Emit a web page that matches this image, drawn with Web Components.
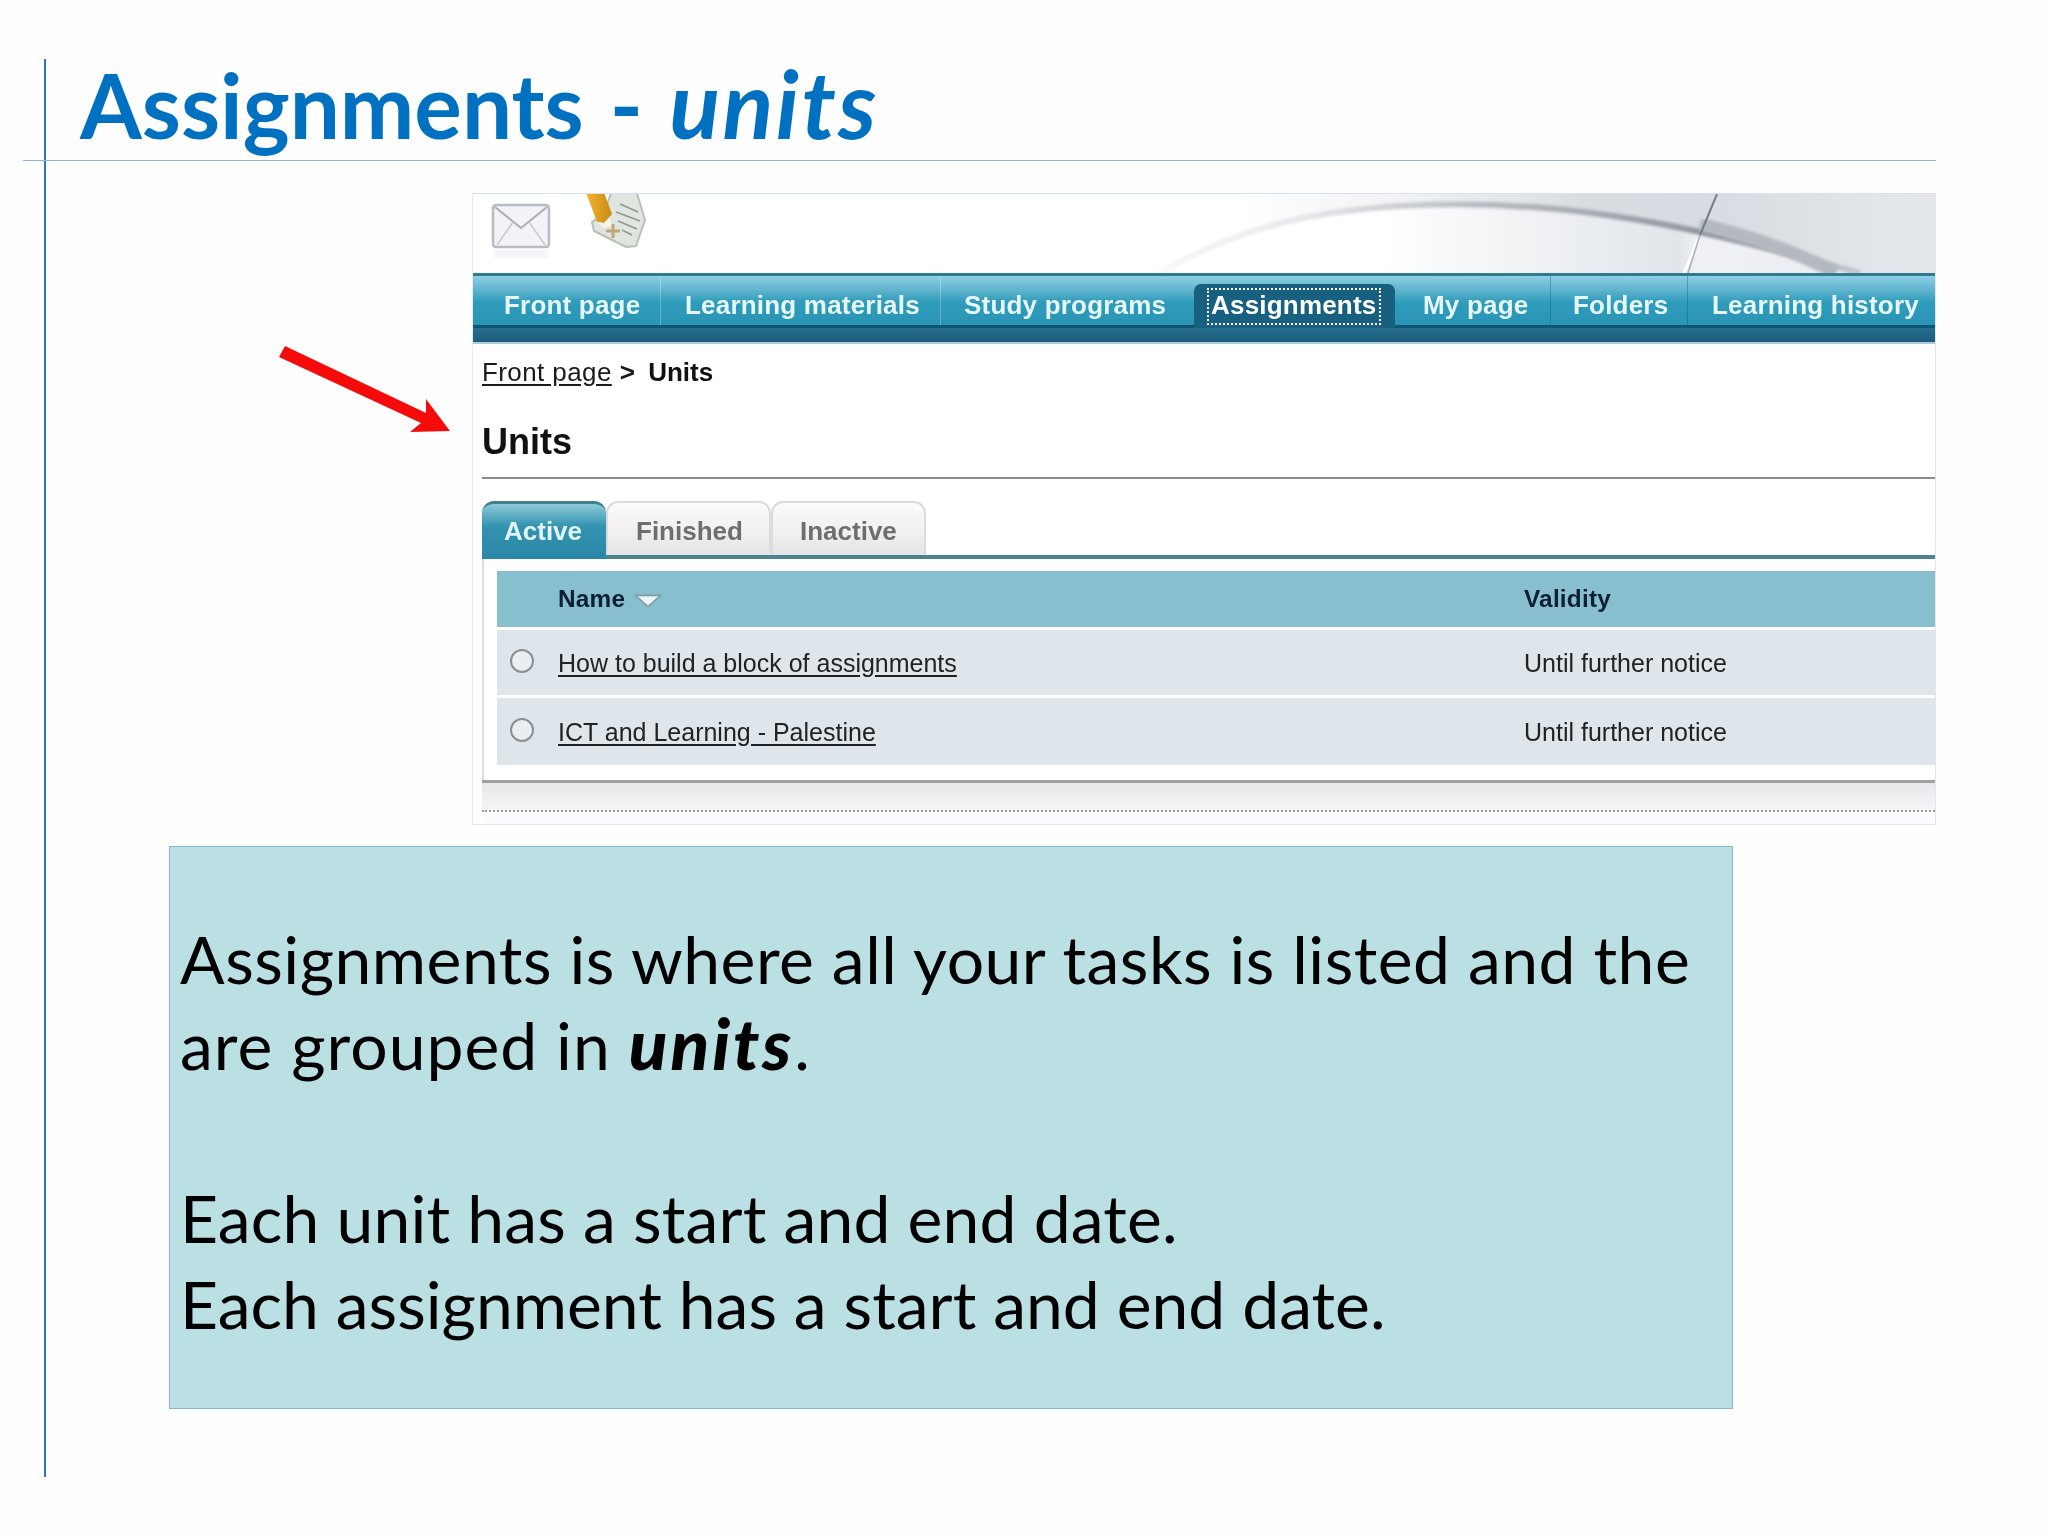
<!DOCTYPE html>
<html lang="en">
<head>
<meta charset="utf-8">
<title>Assignments - units</title>
<style>
  html, body { margin: 0; background: #fefefe; }
</style>
</head>
<body>
<deck-slide>
  <slide-title>Assignments - <em>units</em></slide-title>
  <lms-screen>
    <lms-banner></lms-banner>
    <lms-nav>
      <lms-nav-item pad="31" line="light">Front page</lms-nav-item>
      <lms-nav-item pad="24" line="light">Learning materials</lms-nav-item>
      <lms-nav-item pad="23">Study programs</lms-nav-item>
      <lms-nav-item pad="19" active>Assignments</lms-nav-item>
      <lms-nav-item pad="28" line="dark">My page</lms-nav-item>
      <lms-nav-item pad="22" line="dark">Folders</lms-nav-item>
      <lms-nav-item pad="24">Learning history</lms-nav-item>
    </lms-nav>
    <lms-content>
      <lms-crumbs current="Units">Front page</lms-crumbs>
      <lms-heading>Units</lms-heading>
      <lms-tabs>
        <lms-tab w="124" pad="22" active>Active</lms-tab>
        <lms-tab w="165" pad="28">Finished</lms-tab>
        <lms-tab w="155" pad="27">Inactive</lms-tab>
      </lms-tabs>
      <lms-table>
        <lms-table-head validity="Validity">Name</lms-table-head>
        <lms-table-row h="65" validity="Until further notice">How to build a block of assignments</lms-table-row>
        <lms-table-row h="67" validity="Until further notice">ICT and Learning - Palestine</lms-table-row>
      </lms-table>
    </lms-content>
    <lms-footer></lms-footer>
  </lms-screen>
  <note-box><span style="letter-spacing:.5px">Assignments is where all your tasks is listed and the</span><br><span style="letter-spacing:1px">are grouped in </span><b style="font-weight:900;font-size:71px;line-height:0;letter-spacing:3px"><i>units</i></b>.<br><br><span style="letter-spacing:.15px">Each unit has a start and end date.</span><br>Each assignment has a start and end date.</note-box>
</deck-slide>

<script>
class DeckSlide extends HTMLElement {
  constructor() {
    super();
    this.attachShadow({ mode: "open" });
  }

  connectedCallback() {
    this.shadowRoot.innerHTML = /* html */`
    <style>
      :host { display: block; position: relative; width: 2048px; height: 1536px; overflow: hidden; }
      .frame {
        box-sizing: border-box;
        width: 1892px;
        height: 1418px;
        margin-left: 44px;
        border-left: 2px solid #2a78bb;
        display: flex;
        flex-direction: column;
        align-items: flex-start;
      }
      .top { height: 59px; }
      .arrow { position: absolute; left: 270px; top: 340px; }
    </style>
    <div class="top"></div>
    <div class="frame"><slot></slot></div>
    <svg class="arrow" width="190" height="100" viewBox="270 340 190 100">
      <polygon fill="#f60b0b" points="285,346 426,413 426,399 450,431 410,432 421,423 279,357"/>
    </svg>`;
  }
}

class SlideTitle extends HTMLElement {
  constructor() {
    super();
    this.attachShadow({ mode: "open" });
  }

  connectedCallback() {
    this.shadowRoot.innerHTML = /* html */`
    <style>
      :host {
        display: block;
        box-sizing: border-box;
        width: 1913px;
        height: 102px;
        margin-left: -23px;
        padding-left: 57px;
        border-bottom: 1px solid #8fb4d8;
        font: 700 89px/92px Lato, sans-serif;
        word-spacing: 4.5px;
        color: #0070c0;
        white-space: nowrap;
      }
      ::slotted(em) { font-size: 94px; line-height: 0; letter-spacing: 2.5px; }
    </style>
    <slot></slot>`;
  }
}

class LmsScreen extends HTMLElement {
  constructor() {
    super();
    this.attachShadow({ mode: "open" });
  }

  connectedCallback() {
    this.shadowRoot.innerHTML = /* html */`
    <style>
      :host {
        display: flex;
        flex-direction: column;
        box-sizing: border-box;
        width: 1464px;
        height: 632px;
        margin: 32px 0 0 426px;
        border: 1px solid #dfe6ee;
        border-left-color: #e6ebf0;
        border-top-color: #d5e0ec;
        background: #fff;
        font-family: "Liberation Sans", Arial, sans-serif;
        filter: blur(.5px);
      }
    </style>
    <slot></slot>`;
  }
}

class LmsBanner extends HTMLElement {
  constructor() {
    super();
    this.attachShadow({ mode: "open" });
  }

  connectedCallback() {
    this.shadowRoot.innerHTML = /* html */`
    <style>
      :host { display: block; height: 79px; }
      svg { display: block; }
    </style>
    <svg width="1462" height="79" viewBox="473 194 1462 79">
      <defs>
        <linearGradient id="under" gradientUnits="userSpaceOnUse" x1="1380" y1="0" x2="1935" y2="0">
          <stop offset="0" stop-color="#fff"/>
          <stop offset=".54" stop-color="#e1e5ea"/>
          <stop offset=".57" stop-color="#eff1f4"/>
          <stop offset="1" stop-color="#e8ebee"/>
        </linearGradient>
        <linearGradient id="over" gradientUnits="userSpaceOnUse" x1="1230" y1="0" x2="1935" y2="0">
          <stop offset="0" stop-color="#fff"/>
          <stop offset=".25" stop-color="#f1f2f4"/>
          <stop offset=".5" stop-color="#d9dde2"/>
          <stop offset=".68" stop-color="#d8dce2"/>
          <stop offset="1" stop-color="#e5e8eb"/>
        </linearGradient>
        <linearGradient id="band" gradientUnits="userSpaceOnUse" x1="1160" y1="0" x2="1860" y2="0">
          <stop offset="0" stop-color="#f8f8f9"/>
          <stop offset=".2" stop-color="#e6e7e9"/>
          <stop offset=".45" stop-color="#b8bcc2"/>
          <stop offset=".78" stop-color="#8f959d"/>
          <stop offset="1" stop-color="#c4c8cd"/>
        </linearGradient>
        <linearGradient id="pencil" x1="0" y1="0" x2="1" y2="0">
          <stop offset="0" stop-color="#f2b632"/>
          <stop offset="1" stop-color="#c98a12"/>
        </linearGradient>
        <filter id="soft"><feGaussianBlur stdDeviation="1.6"/></filter>
        <filter id="softer"><feGaussianBlur stdDeviation=".7"/></filter>
      </defs>
      <rect x="473" y="194" width="1462" height="79" fill="#fff"/>
      <rect x="1380" y="194" width="555" height="79" fill="url(#under)"/>
      <path fill="url(#over)" d="M1160 273 C1230 232 1300 212 1400 206 C1500 200 1600 210 1700 232 C1770 248 1820 262 1860 273 L1935 273 L1935 194 L1160 194 Z"/>
      <path fill="none" stroke="url(#band)" stroke-width="6" filter="url(#soft)" d="M1160 273 C1230 232 1300 212 1400 206 C1500 200 1600 210 1700 232 C1770 248 1820 262 1860 273"/>
      <path fill="none" stroke="#b4b9c0" stroke-width="13" filter="url(#soft)" d="M1700 224 C1760 238 1800 254 1836 273"/>
      <path fill="none" stroke="#fff" stroke-width="3" filter="url(#softer)" d="M1698 240 L1684 273"/>
      <path fill="none" stroke="#777d85" stroke-width="2" d="M1717 194 L1700 235"/>
      <path fill="none" stroke="#a9aeb5" stroke-width="1.5" d="M1700 235 L1688 273"/>

      <!-- mail -->
      <g filter="url(#softer)">
        <rect x="493" y="205" width="56" height="42" rx="3" fill="#f1f3f7" stroke="#b7bbc4" stroke-width="2.5"/>
        <path fill="none" stroke="#a9aeb8" stroke-width="2" d="M495 207 L521 228 L547 207"/>
        <path fill="none" stroke="#c6cad2" stroke-width="1.5" d="M497 245 L513 222 M545 245 L529 222"/>
        <rect x="494" y="250" width="54" height="8" fill="#f5f6f8"/>
      </g>

      <!-- note with pencil -->
      <g filter="url(#softer)">
        <polygon fill="#dfe5df" stroke="#b9c0b6" stroke-width="2" points="612,190 636,190 645,220 636,246 626,247 594,231 592,222 604,214"/>
        <path fill="none" stroke="#8e9a90" stroke-width="1.6" d="M620 204 L638 212 M616 212 L640 221 M618 221 L637 229 M622 230 L632 235"/>
        <polygon fill="url(#pencil)" points="585,190 603,190 612,214 604,223 597,222"/>
        <polygon fill="#f7f4e8" points="597,222 604,223 609,218 612,226 604,228"/>
        <path fill="none" stroke="#c2a874" stroke-width="3" d="M606 231 L620 231 M613 224 L613 238"/>
      </g>
    </svg>`;
  }
}

class LmsNav extends HTMLElement {
  constructor() {
    super();
    this.attachShadow({ mode: "open" });
  }

  connectedCallback() {
    this.shadowRoot.innerHTML = /* html */`
    <style>
      :host {
        display: grid;
        grid-template-columns: 188px 280px 253px 201px 156px 137px 1fr;
        height: 71px;
        box-sizing: border-box;
        padding-bottom: 17px;
        border-top: 3px solid #317a90;
        border-bottom: 2px solid #a8d0da;
        background: linear-gradient(#8dd0e4 0, #5fb4cd 14px, #2f9cbc 26px, #2a93b4 51px);
        position: relative;
      }
      .low {
        position: absolute; left: 0; right: 0; bottom: 0; height: 17px;
        box-sizing: border-box;
        border-top: 3px solid #0f5673;
        background: linear-gradient(#276f8f, #1c5b7b);
      }
    </style>
    <slot></slot>
    <div class="low"></div>`;
  }
}

class LmsNavItem extends HTMLElement {
  constructor() {
    super();
    this.attachShadow({ mode: "open" });
  }

  connectedCallback() {
    const pad = this.getAttribute("pad") ?? "24";
    const line = this.getAttribute("line");
    const active = this.hasAttribute("active");
    const color = { light: "#ffffff44", dark: "#0a4f6e55" }[line] ?? "transparent";
    this.shadowRoot.innerHTML = /* html */`
    <style>
      :host {
        display: block;
        box-sizing: border-box;
        padding-left: ${pad}px;
        border-right: 1px solid ${color};
        font-size: 26px;
        font-weight: 700;
        letter-spacing: .2px;
        color: #e6f7fb;
        white-space: nowrap;
        line-height: 30px;
        padding-top: 14px;
      }
      :host([active]) {
        margin-top: 8px;
        padding-top: 6px;
        position: relative;
        z-index: 1;
        margin-bottom: -3px;
        background: #17607f;
        border-radius: 7px 7px 0 0;
      }
      .focus {
        display: inline-block;
        height: 33px;
        margin-top: -3px;
        padding: 0 3px 0 2px;
        margin-left: -4px;
        outline: 2px dotted #fff;
        outline-offset: 0;
        color: #fff;
      }
    </style>
    ${active ? `<span class="focus"><slot></slot></span>` : `<slot></slot>`}`;
  }
}

class LmsContent extends HTMLElement {
  constructor() {
    super();
    this.attachShadow({ mode: "open" });
  }

  connectedCallback() {
    this.shadowRoot.innerHTML = /* html */`
    <style>
      :host { display: block; padding-left: 9px; }
    </style>
    <slot></slot>`;
  }
}

class LmsCrumbs extends HTMLElement {
  constructor() {
    super();
    this.attachShadow({ mode: "open" });
  }

  connectedCallback() {
    const current = this.getAttribute("current");
    this.shadowRoot.innerHTML = /* html */`
    <style>
      :host {
        display: block;
        height: 52px;
        padding-top: 13px;
        box-sizing: border-box;
        font-size: 26px;
        line-height: 30px;
        color: #1a1a1a;
        white-space: nowrap;
      }
      u { text-underline-offset: 3px; letter-spacing: .4px; }
      .sep { font-weight: 700; margin: 0 6px 0 8px; }
      b { color: #111; }
    </style>
    <u><slot></slot></u><span class="sep">&gt;</span> <b>${current}</b>`;
  }
}

class LmsHeading extends HTMLElement {
  constructor() {
    super();
    this.attachShadow({ mode: "open" });
  }

  connectedCallback() {
    this.shadowRoot.innerHTML = /* html */`
    <style>
      :host {
        display: block;
        box-sizing: border-box;
        height: 83px;
        padding-top: 25px;
        border-bottom: 2px solid #8a8a8a;
        font-size: 36px;
        font-weight: 700;
        line-height: 42px;
        color: #111;
      }
    </style>
    <slot></slot>`;
  }
}

class LmsTabs extends HTMLElement {
  constructor() {
    super();
    this.attachShadow({ mode: "open" });
  }

  connectedCallback() {
    this.shadowRoot.innerHTML = /* html */`
    <style>
      :host {
        display: flex;
        box-sizing: border-box;
        height: 80px;
        padding-top: 22px;
        border-bottom: 4px solid #4d8290;
      }
    </style>
    <slot></slot>`;
  }
}

class LmsTab extends HTMLElement {
  constructor() {
    super();
    this.attachShadow({ mode: "open" });
  }

  connectedCallback() {
    const w = this.getAttribute("w");
    const pad = this.getAttribute("pad");
    this.shadowRoot.innerHTML = /* html */`
    <style>
      :host {
        display: block;
        box-sizing: border-box;
        width: ${w}px;
        height: 54px;
        padding: 13px 0 0 ${pad}px;
        border: 2px solid #dcdadb;
        border-bottom: 3px solid #dfe7ea;
        border-radius: 12px 12px 0 0;
        background: linear-gradient(#fbfbfb, #f1efef 60%, #e6e4e4);
        font-size: 26px;
        font-weight: 700;
        line-height: 30px;
        color: #6e6e6e;
      }
      :host([active]) {
        height: 58px;
        border: 0;
        border-top: 3px solid #3f7f90;
        background: linear-gradient(#8ccada, #3493b0 22px, #2a87a6);
        color: #dff6fa;
        padding-top: 12px;
      }
    </style>
    <slot></slot>`;
  }
}

class LmsTable extends HTMLElement {
  constructor() {
    super();
    this.attachShadow({ mode: "open" });
  }

  connectedCallback() {
    this.shadowRoot.innerHTML = /* html */`
    <style>
      :host {
        display: flex;
        flex-direction: column;
        gap: 3px;
        box-sizing: border-box;
        height: 221px;
        padding: 12px 0 15px 13px;
        border-left: 2px solid #dcdcdc;
      }
    </style>
    <slot></slot>`;
  }
}

class LmsTableHead extends HTMLElement {
  constructor() {
    super();
    this.attachShadow({ mode: "open" });
  }

  connectedCallback() {
    const validity = this.getAttribute("validity");
    this.shadowRoot.innerHTML = /* html */`
    <style>
      :host {
        display: grid;
        grid-template-columns: 61px 966px 1fr;
        align-items: center;
        height: 56px;
        background: #88bfce;
        font-size: 24.4px;
        font-weight: 700;
        letter-spacing: .2px;
        color: #0c2033;
      }
      .name { grid-column: 2; display: flex; align-items: center; gap: 9px; }
      svg { display: block; margin-top: 3px; }
    </style>
    <div class="name"><span><slot></slot></span>
      <svg width="28" height="14" viewBox="0 0 28 14">
        <polygon points="1.5,1.5 26.5,1.5 14,12.5" fill="#eaf3f6" stroke="#7b98a6" stroke-width="1.6" stroke-linejoin="round"/>
      </svg>
    </div>
    <div>${validity}</div>`;
  }
}

class LmsTableRow extends HTMLElement {
  constructor() {
    super();
    this.attachShadow({ mode: "open" });
  }

  connectedCallback() {
    const h = this.getAttribute("h");
    const validity = this.getAttribute("validity");
    this.shadowRoot.innerHTML = /* html */`
    <style>
      :host {
        display: grid;
        grid-template-columns: 61px 966px 1fr;
        align-items: center;
        height: ${h}px;
        background: #dfe6eb;
        font-size: 25px;
        color: #222;
        white-space: nowrap;
      }
      .radio {
        box-sizing: border-box;
        width: 24px;
        height: 24px;
        margin: -4px 0 0 13px;
        border: 2px solid #8a8f93;
        border-radius: 50%;
        background: #e9eef1;
      }
      .cell { line-height: 28px; }
      u { text-underline-offset: 3px; }
    </style>
    <div class="radio"></div>
    <div class="cell"><u><slot></slot></u></div>
    <div class="cell">${validity}</div>`;
  }
}

class LmsFooter extends HTMLElement {
  constructor() {
    super();
    this.attachShadow({ mode: "open" });
  }

  connectedCallback() {
    this.shadowRoot.innerHTML = /* html */`
    <style>
      :host {
        display: block;
        flex: 1;
        box-sizing: border-box;
        margin-left: 9px;
        border-top: 3px solid #a0a0a0;
        background: linear-gradient(#e9e9eb, #f5f5f7 28px, #fbfcfd 28px);
      }
      .dots { margin-top: 27px; border-top: 2px dotted #9a9a9a; }
    </style>
    <div class="dots"></div>`;
  }
}

class NoteBox extends HTMLElement {
  constructor() {
    super();
    this.attachShadow({ mode: "open" });
  }

  connectedCallback() {
    this.shadowRoot.innerHTML = /* html */`
    <style>
      :host {
        display: block;
        box-sizing: border-box;
        width: 1564px;
        height: 563px;
        margin: 21px 0 0 123px;
        padding: 69px 0 0 10px;
        border: 1px solid #86b6d2;
        background: #bae0e4;
        font: 400 66px/86.3px Lato, sans-serif;
        color: #000;
        white-space: nowrap;
      }
    </style>
    <slot></slot>`;
  }
}

customElements.define("deck-slide", DeckSlide);
customElements.define("slide-title", SlideTitle);
customElements.define("lms-screen", LmsScreen);
customElements.define("lms-banner", LmsBanner);
customElements.define("lms-nav", LmsNav);
customElements.define("lms-nav-item", LmsNavItem);
customElements.define("lms-content", LmsContent);
customElements.define("lms-crumbs", LmsCrumbs);
customElements.define("lms-heading", LmsHeading);
customElements.define("lms-tabs", LmsTabs);
customElements.define("lms-tab", LmsTab);
customElements.define("lms-table", LmsTable);
customElements.define("lms-table-head", LmsTableHead);
customElements.define("lms-table-row", LmsTableRow);
customElements.define("lms-footer", LmsFooter);
customElements.define("note-box", NoteBox);
</script>
</body>
</html>
